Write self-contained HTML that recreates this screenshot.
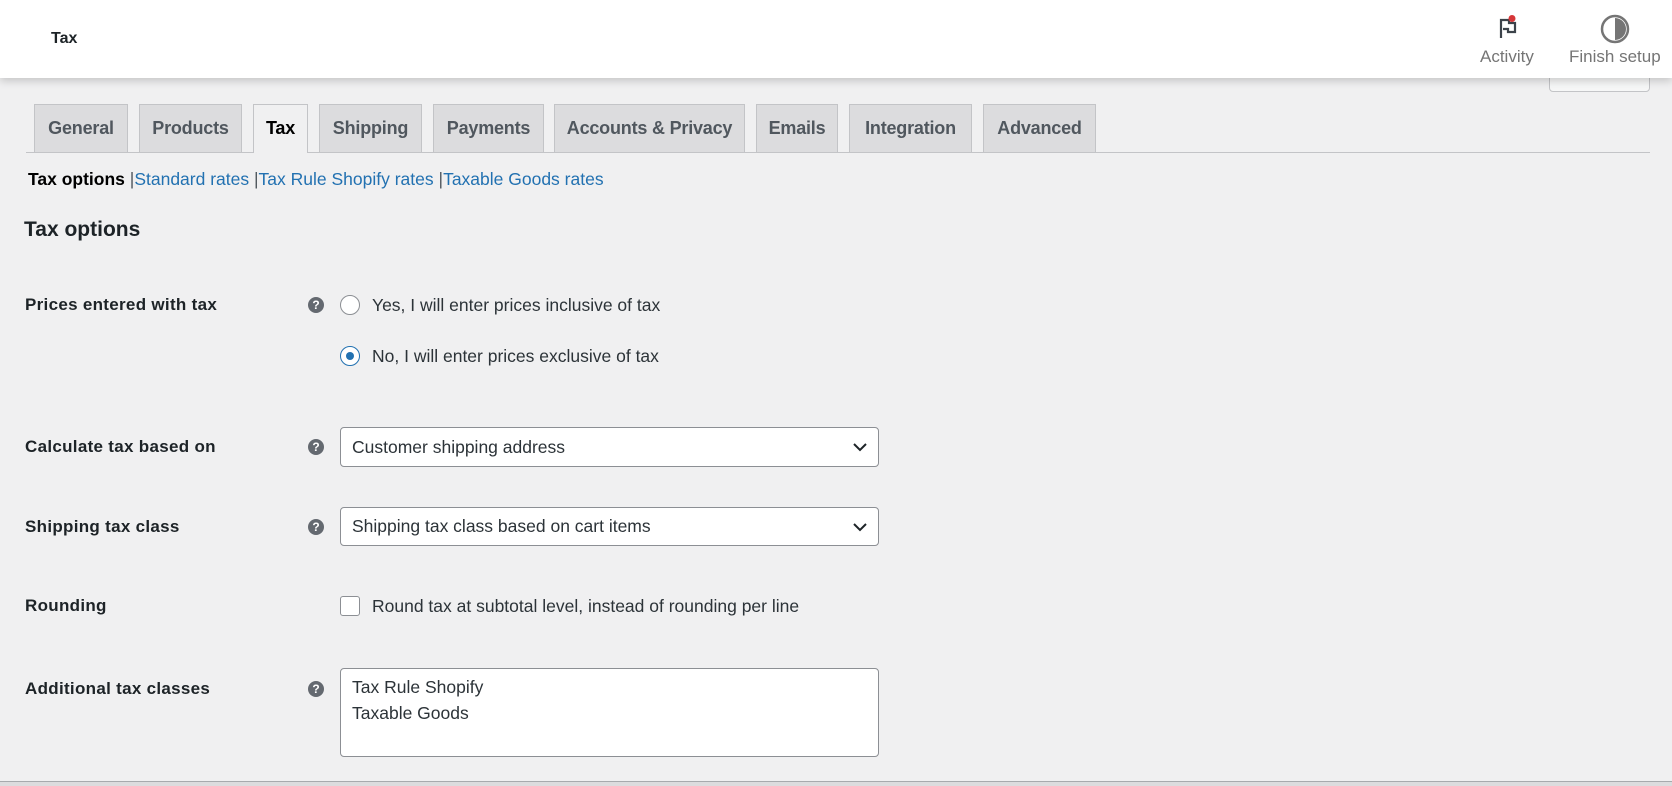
<!DOCTYPE html>
<html><head><meta charset="utf-8"><style>
*{box-sizing:border-box;margin:0;padding:0}
body{width:1672px;height:786px;overflow:hidden;background:#f0f0f1;font-family:"Liberation Sans",sans-serif;color:#1d2327;position:relative}
.hdr{position:absolute;left:0;top:0;width:1672px;height:78px;background:#fff;box-shadow:0 3px 8px rgba(0,0,0,.18);z-index:2}
.abs{position:absolute}
.tab{position:absolute;top:104px;height:48px;background:#dcdcde;border:1px solid #c3c4c7;border-bottom:none;font-size:18px;color:#50575e;text-align:center;line-height:46px;font-weight:600;letter-spacing:-0.2px}
.tab.act{background:#f0f0f1;color:#000;height:49px}
.lbl{position:absolute;left:25px;font-size:17px;font-weight:bold;color:#1d2327;letter-spacing:0.3px}
.help{position:absolute;left:308px;width:16px;height:16px;border-radius:50%;background:#646970;color:#fff;font-size:12px;font-weight:bold;text-align:center;line-height:16px}
.radio{position:absolute;left:340px;width:20px;height:20px;border-radius:50%;border:1px solid #8c8f94;background:#fff}
.txt{position:absolute;left:372px;font-size:17.5px;color:#2c3338;white-space:nowrap}
.sel{position:absolute;left:340px;width:539px;background:#fff;border:1px solid #8c8f94;border-radius:4px;font-size:17.5px;color:#2c3338;padding-left:11px}
</style></head><body>
<div class="hdr">
 <div class="abs" style="left:51px;top:30px;font-size:16px;font-weight:600;color:#1d2327">Tax</div>
 <svg class="abs" style="left:1496px;top:14px" width="26" height="26" viewBox="0 0 26 26"><path d="M5 24V6h8v3h6v9h-7v-3H7" fill="none" stroke="#3c434a" stroke-width="2.2"/><circle cx="16" cy="4.5" r="3.5" fill="#d63638"/></svg>
 <div class="abs" style="left:1480px;top:47px;font-size:17px;color:#757575">Activity</div>
 <svg class="abs" style="left:1599px;top:13px" width="32" height="32" viewBox="0 0 32 32"><circle cx="16" cy="16" r="13" fill="none" stroke="#757575" stroke-width="2.5"/><path d="M16 5a11 11 0 0 1 0 22z" fill="#757575"/></svg>
 <div class="abs" style="left:1569px;top:47px;font-size:17px;color:#757575">Finish setup</div>
</div>
<div class="abs" style="left:1549px;top:64px;width:101px;height:28px;border:1px solid #c3c4c7;border-radius:4px;background:#f6f7f7"></div>
<div class="abs" style="left:26px;top:152px;width:1624px;height:1px;background:#c3c4c7"></div>
<div class="tab" style="left:34px;width:94px">General</div>
<div class="tab" style="left:139px;width:103px">Products</div>
<div class="tab act" style="left:253px;width:55px">Tax</div>
<div class="tab" style="left:319px;width:103px">Shipping</div>
<div class="tab" style="left:433px;width:111px">Payments</div>
<div class="tab" style="left:554px;width:191px">Accounts &amp; Privacy</div>
<div class="tab" style="left:756px;width:82px">Emails</div>
<div class="tab" style="left:849px;width:123px">Integration</div>
<div class="tab" style="left:983px;width:113px">Advanced</div>
<div class="abs" style="left:28px;top:169px;font-size:17.5px;color:#50575e;white-space:nowrap"><b style="color:#000">Tax options</b> |<span style="color:#2271b1">Standard rates</span> |<span style="color:#2271b1">Tax Rule Shopify rates</span> |<span style="color:#2271b1">Taxable Goods rates</span></div>
<div class="abs" style="left:24px;top:218px;font-size:21px;font-weight:600">Tax options</div>
<div class="lbl" style="top:295px">Prices entered with tax</div>
<div class="help" style="top:297px">?</div>
<div class="radio" style="top:295px"></div>
<div class="txt" style="top:295px">Yes, I will enter prices inclusive of tax</div>
<div class="radio" style="top:346px;border-color:#2271b1"><div style="position:absolute;left:5px;top:5px;width:8px;height:8px;border-radius:50%;background:#2271b1"></div></div>
<div class="txt" style="top:346px">No, I will enter prices exclusive of tax</div>
<div class="lbl" style="top:437px">Calculate tax based on</div>
<div class="help" style="top:439px">?</div>
<div class="sel" style="top:427px;height:40px;line-height:38px">Customer shipping address<svg class="abs" style="right:10px;top:13px" width="16" height="12" viewBox="0 0 16 12"><path d="M2 3l6 6 6-6" fill="none" stroke="#1d2327" stroke-width="2"/></svg></div>
<div class="lbl" style="top:517px">Shipping tax class</div>
<div class="help" style="top:519px">?</div>
<div class="sel" style="top:507px;height:39px;line-height:37px">Shipping tax class based on cart items<svg class="abs" style="right:10px;top:13px" width="16" height="12" viewBox="0 0 16 12"><path d="M2 3l6 6 6-6" fill="none" stroke="#1d2327" stroke-width="2"/></svg></div>
<div class="lbl" style="top:596px">Rounding</div>
<div class="abs" style="left:340px;top:596px;width:20px;height:20px;border:1px solid #8c8f94;border-radius:3px;background:#fff"></div>
<div class="txt" style="top:596px">Round tax at subtotal level, instead of rounding per line</div>
<div class="lbl" style="top:679px">Additional tax classes</div>
<div class="help" style="top:681px">?</div>
<div class="sel" style="top:668px;height:89px;padding-top:5px;line-height:26px">Tax Rule Shopify<br>Taxable Goods</div>
<div class="abs" style="left:0;top:781px;width:1672px;height:5px;background:#dcdcde;border-top:1px solid #a7aaad"></div>
</body></html>
